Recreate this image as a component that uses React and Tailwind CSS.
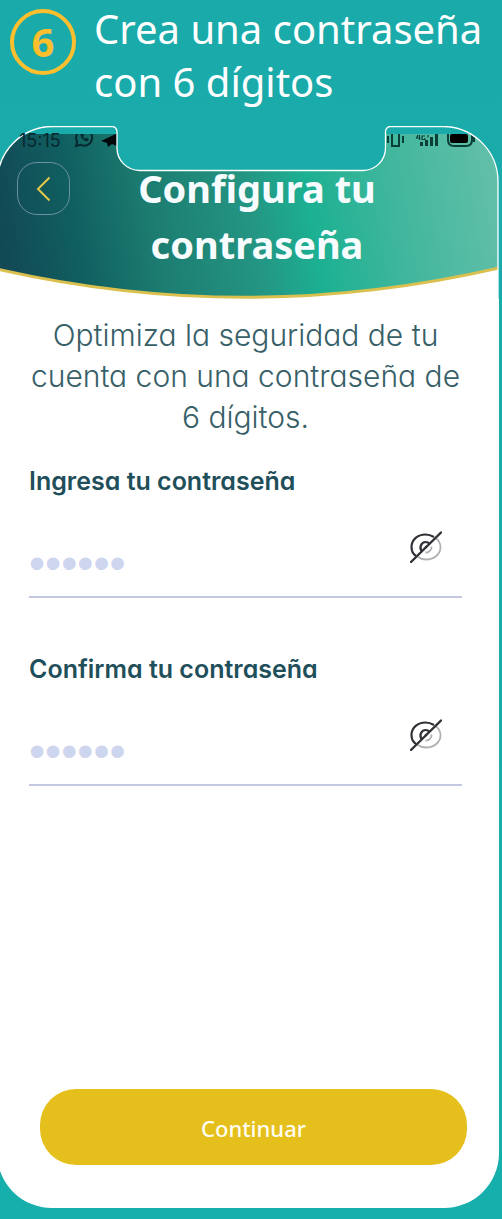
import React, { useState } from "react";

const FRAME =
  "M0.5 173V55A55 55 0 0 1 55.5 0.5H115a5 5 0 0 1 5 5V22a22.5 22.5 0 0 0 22.5 22.5H366a22.5 22.5 0 0 0 22.5 -22.5V5.5a5 5 0 0 1 5 -5H446A55 55 0 0 1 501 55.5V173";

function HeaderArt() {
  return (
    <svg
      className="absolute inset-0 h-full w-full"
      viewBox="0 0 502 173"
      preserveAspectRatio="none"
      aria-hidden="true"
    >
      <defs>
        <clipPath id="frame">
          <path d={FRAME} />
        </clipPath>
        <clipPath id="screen">
          <rect y="8" width="502" height="165" />
        </clipPath>
        <linearGradient id="sky" gradientUnits="userSpaceOnUse" x1="4" y1="110" x2="496" y2="30">
          <stop offset="0" stopColor="#124955" />
          <stop offset="0.15" stopColor="#105f60" />
          <stop offset="0.3" stopColor="#1c7c70" />
          <stop offset="0.5" stopColor="#249583" />
          <stop offset="0.62" stopColor="#1cb092" />
          <stop offset="0.8" stopColor="#42b79d" />
          <stop offset="1" stopColor="#62bfa9" />
        </linearGradient>
      </defs>
      <g clipPath="url(#frame)">
        <rect y="100" width="502" height="73" fill="#fff" />
        <path d="M0 8H502V142Q250 200 0 143Z" fill="url(#sky)" />
        <path d="M0 143Q250 200 502 142" fill="none" stroke="#d9c04f" strokeWidth="3" />
        {/* status icons, cut by the top edge of the screen */}
        <g clipPath="url(#screen)">
          <g transform="translate(77 2)">
            <g fill="none" stroke="#062a30" strokeWidth="2">
              <path d="M2 18l1.200-4.400A8 8 0 1 1 6.400 16.700Z" />
              <path
                d="M7 6c-1 3 3 7.500 6.500 7l1-2-2.500-1-1 1c-1 0-2-1.500-2-2.200l1-1L9 5.500Z"
                fill="#062a30"
                strokeWidth="0.500"
              />
            </g>
            <path d="M27 13L48 3V20L38 16L34 19L33 15Z" fill="#02090c" />
          </g>
          <g transform="translate(0 9)">
            <g fill="none" stroke="#0a3f37" strokeWidth="2">
              <path d="M391 1v7M406 1v7M395 -2v13h7V-2" />
            </g>
            <g fill="#0a3f37">
              <rect x="423" y="7" width="3" height="4" />
              <rect x="428" y="5" width="3" height="6" />
              <rect x="433" y="2" width="3" height="9" />
              <rect x="438" y="-1" width="3" height="12" />
            </g>
            <path
              d="M421 0l-1.500 3h4M422.500 0v5M428 1h-3v3.500h3V3M431 0v2.500"
              fill="none"
              stroke="#0a3f37"
              strokeWidth="1.200"
            />
            <path d="M451 -2v7q0 6 6 6h12q6 0 6-6V-2" fill="none" stroke="#0a3f37" strokeWidth="2" />
            <rect x="453" y="-1" width="18" height="9" rx="2" fill="#000" />
            <rect x="476" y="2" width="2" height="5" fill="#0a3f37" />
          </g>
        </g>
      </g>
      <path d={FRAME} fill="none" stroke="#fff" strokeWidth="1.300" />
    </svg>
  );
}

function EyeOff() {
  return (
    <svg className="h-8 w-8" viewBox="0 0 32 32" fill="none" aria-hidden="true">
      <path d="M25 7C29 9 30.500 12 30.500 16.500C30.500 23 24 28.500 16 28.500C12.500 28.500 10 27.500 8 26" stroke="#b0b0b2" strokeWidth="1.800" />
      <path d="M21.500 15.500a5.500 5.500 0 0 1-6 6" stroke="#b0b0b2" strokeWidth="1.800" />
      <path d="M6 25C3 23 1.500 19.500 1.500 16C1.500 8.500 8 3.500 15.500 3.500C18.500 3.500 21.500 4.500 24 6" stroke="#303036" strokeWidth="2.200" />
      <path d="M12 20.500C8.500 16.500 11.500 11 15.500 11C17.500 11 18.500 11.500 20 13" stroke="#303036" strokeWidth="2.200" />
      <path d="M15 17L17 15" stroke="#303036" strokeWidth="2" />
      <path d="M1 31L31 1.500" stroke="#303036" strokeWidth="2.400" strokeLinecap="round" />
    </svg>
  );
}

function PasswordField({ id, label }) {
  const [value, setValue] = useState("123456");
  const [shown, setShown] = useState(false);
  return (
    <div>
      <label
        htmlFor={id}
        className="block text-[25px] leading-6 font-semibold text-[#1f4f5a] [font-feature-settings:'cv11']"
      >
        {label}
      </label>
      <div className="flex h-[105px] items-start border-b-2 border-[#c3c7df] pr-5">
        <input
          id={id}
          type={shown ? "text" : "password"}
          inputMode="numeric"
          maxLength={6}
          value={value}
          onChange={(e) => setValue(e.target.value)}
          className="mt-10 h-[60px] min-w-0 flex-1 bg-transparent font-['Liberation_Sans',sans-serif] text-[46px] text-[#ced5ee] outline-none"
        />
        <button
          type="button"
          aria-label={shown ? "Ocultar contraseña" : "Mostrar contraseña"}
          onClick={() => setShown(!shown)}
          className="mt-[38px]"
        >
          <EyeOff />
        </button>
      </div>
    </div>
  );
}

export default function App() {
  return (
    <div className="flex min-h-screen flex-col overflow-hidden bg-linear-to-b from-[#1aaaaa] to-[#16afab] pb-[11px] font-[Inter,sans-serif]">
      <div className="flex h-[126px] items-start gap-[18px] pt-[2px] pl-[10px] font-['Noto_Sans',sans-serif]">
        <span className="mt-[7px] flex size-[66px] shrink-0 items-center justify-center rounded-full border-4 border-[#fdbf2d] text-[40px] leading-none font-bold text-[#fdbf2d]">
          6
        </span>
        <h1 className="text-[40px] leading-[53px] whitespace-nowrap text-white">
          Crea una contraseña
          <br />
          con 6 dígitos
        </h1>
      </div>

      <main className="mr-[3px] -ml-[3px] flex flex-1 flex-col">
        <header className="relative h-[173px]">
          <HeaderArt />
          <div className="relative pt-2 pl-[22px] text-[18px] leading-[14px] text-[#062a30]">
            15:15
          </div>
          <div className="relative flex pt-[14px] pl-5">
            <button
              type="button"
              aria-label="Volver"
              className="flex size-[53px] shrink-0 items-center justify-center rounded-[20px] border border-[#6b8fa3]"
            >
              <svg className="h-7 w-4" viewBox="0 0 16 28" fill="none" aria-hidden="true">
                <path d="M13.500 2.500L2 14L13.500 25.500" stroke="#e2c84a" strokeWidth="2" />
              </svg>
            </button>
            <h2 className="-mt-[2px] mr-[55px] flex-1 text-center font-['Noto_Sans',sans-serif] text-[38px] leading-[56px] font-bold text-[#f7fcff]">
              Configura tu
              <br />
              contraseña
            </h2>
          </div>
        </header>

        <div className="flex flex-1 flex-col rounded-b-[55px] bg-white pb-[43px]">
          <div className="flex flex-col pt-4 pr-[37px] pl-8">
            <p className="mb-[31px] text-center text-[30px] leading-[41px] font-light whitespace-nowrap text-[#376068] [font-feature-settings:'cv11']">
              Optimiza la seguridad de tu
              <br />
              cuenta con una contraseña de
              <br />6 dígitos.
            </p>
            <div className="flex flex-col gap-[59px]">
              <PasswordField id="password" label="Ingresa tu contraseña" />
              <PasswordField id="confirm" label="Confirma tu contraseña" />
            </div>
          </div>
          <div className="mt-auto pt-8 pr-8 pl-[43px]">
            <button
              type="button"
              className="h-[76px] w-full rounded-[36px] bg-[#e5bf1b] pt-[2px] font-['Noto_Sans',sans-serif] text-[22px] font-medium text-[#fffdf0]"
            >
              Continuar
            </button>
          </div>
        </div>
      </main>
    </div>
  );
}
